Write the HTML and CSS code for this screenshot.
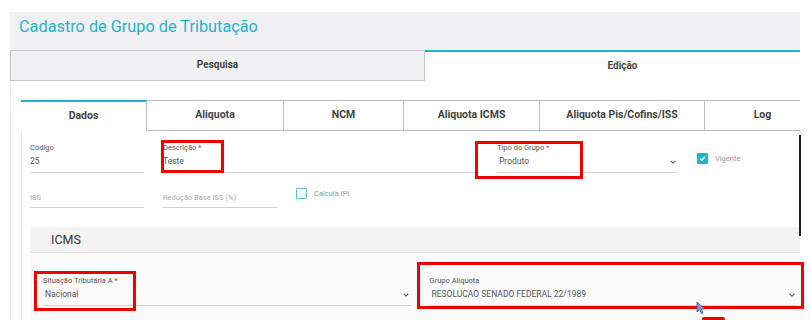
FILE: index.html
```html
<!DOCTYPE html>
<html lang="pt-BR">
<head>
    <meta charset="UTF-8">
    <meta name="viewport" content="width=device-width, initial-scale=1.0">
    <title>Cadastro de Grupo de Tributação</title>
    <link rel="stylesheet" href="styles.css">
</head>
<body>
    <div class="page">
        <header class="title-bar">
            <h1>Cadastro de Grupo de Tributação</h1>
        </header>

        <nav class="main-tabs">
            <div class="main-tab">Pesquisa</div>
            <div class="main-tab active">Edição</div>
        </nav>

        <div class="outer">
            <nav class="sub-tabs">
                <div class="sub-tab active">Dados</div>
                <div class="sub-tab">Aliquota</div>
                <div class="sub-tab">NCM</div>
                <div class="sub-tab">Aliquota ICMS</div>
                <div class="sub-tab">Aliquota Pis/Cofins/ISS</div>
                <div class="sub-tab last">Log</div>
            </nav>

            <div class="inner">
                <div class="row row-main">
                    <div class="field">
                        <label>Código</label>
                        <div class="value">25</div>
                    </div>
                    <div class="field">
                        <label>Descrição <span class="req">*</span></label>
                        <div class="value">Teste</div>
                    </div>
                    <div class="field select">
                        <label>Tipo do Grupo <span class="req">*</span></label>
                        <div class="value">Produto
                            <svg class="chevron" viewBox="0 0 8 5"><polyline points="1,1 4,4 7,1"/></svg>
                        </div>
                    </div>
                    <div class="check check-top">
                        <span class="box checked">
                            <svg viewBox="0 0 10 10"><polyline points="2.2,5.2 4.2,7 7.8,3"/></svg>
                        </span>
                        <span>Vigente</span>
                    </div>
                </div>

                <div class="row row-second">
                    <div class="field empty">
                        <label>ISS</label>
                    </div>
                    <div class="field empty">
                        <label>Redução Base ISS (%)</label>
                    </div>
                    <div class="check">
                        <span class="box"></span>
                        <span>Calcula IPI</span>
                    </div>
                </div>

                <section class="icms">
                    <div class="icms-head">ICMS</div>
                    <div class="icms-body">
                        <div class="field select">
                            <label>Situação Tributária A <span class="req">*</span></label>
                            <div class="value">Nacional
                                <svg class="chevron" viewBox="0 0 8 5"><polyline points="1,1 4,4 7,1"/></svg>
                            </div>
                        </div>
                        <div class="field select">
                            <label>Grupo Aliquota</label>
                            <div class="value">RESOLUCAO SENADO FEDERAL 22/1989
                                <svg class="chevron" viewBox="0 0 8 5"><polyline points="1,1 4,4 7,1"/></svg>
                            </div>
                        </div>
                    </div>
                </section>
            </div>
        </div>
    </div>

    <!-- anotações do print -->
    <div class="mark" style="left: 161px; top: 140px; width: 63px; height: 33px;"></div>
    <div class="mark" style="left: 475px; top: 141px; width: 108px; height: 38px;"></div>
    <div class="mark" style="left: 34px; top: 271px; width: 102px; height: 40px;"></div>
    <div class="mark" style="left: 417px; top: 262px; width: 387px; height: 47px;"></div>
    <div class="mark-stroke"></div>
    <div class="edge-line"></div>
    <svg class="cursor" viewBox="0 0 10 14">
        <path d="M1 1 L1 11 L3.6 8.6 L5.4 12.6 L7 11.9 L5.3 8 L8.8 8 Z"/>
    </svg>
</body>
</html>
```

FILE: styles.css
```css
body { margin: 0; background: #fff; font-family: Roboto, "Liberation Sans", sans-serif; color: #444; position: relative; }
.page { padding: 12px 10px 0 10px; }

.title-bar { height: 38px; background: #f1f1f3; padding: 3px 0 0 9px; box-sizing: border-box; }
.title-bar h1 { margin: 0; font-size: 16.3px; line-height: 24px; font-weight: 400; color: #25b2cb; }

.main-tabs { display: flex; height: 31px; }
.main-tab { box-sizing: border-box; text-align: center; font-size: 10px; font-weight: 700; color: #444; line-height: 27px; }
.main-tab:first-child { flex: 0 0 415px; background: #f1f1f3; border: 1px solid #c6c9d0; }
.main-tab.active { flex: 1; border-top: 2px solid #1fb3cc; background: #fff; padding-left: 20px; }

.outer { border-left: 1px solid #ececec; padding: 19px 0 0 10px; }

.sub-tabs { display: grid; grid-template-columns: 125px 137px 120px 136px 165px 1fr; height: 31px; }
.sub-tab {
    box-sizing: border-box;
    text-align: center;
    font-size: 10.5px;
    font-weight: 700;
    color: #444;
    line-height: 28px;
    border-top: 1px solid #b9bfc8;
    border-left: 1px solid #b9bfc8;
    border-bottom: 1px solid #b9bfc8;
}
.sub-tab.active { border: none; border-top: 2px solid #1fb3cc; }
.sub-tab.last { padding-left: 20px; }

.inner { border-left: 1px solid #ececec; padding: 0 0 30px 8px; }

.row { display: grid; column-gap: 19px; align-items: start; }
.row-main { grid-template-columns: 114px 315px 181px auto; padding-top: 12px; }
.row-second { grid-template-columns: 114px 114px auto; margin-top: 15px; }

.field { border-bottom: 1px solid #d2d2d2; padding-bottom: 4px; }
.field label { display: block; font-size: 7.5px; line-height: 10px; color: #555; margin-bottom: 2px; }
.field .value { font-size: 8.5px; line-height: 13px; color: #555; position: relative; }
.field.select .value { padding-left: 2px; }
.field.empty { padding-top: 5px; }
.field.empty label { color: #aaa; margin-bottom: 0; }
.req { color: #e53935; }

.chevron { position: absolute; right: 2px; top: 5px; width: 6px; height: 4px; fill: none; stroke: #555; stroke-width: 1.4; }

.check { display: flex; align-items: center; gap: 7px; font-size: 7.5px; color: #999; }
.check-top { margin-top: 10px; }
.box { width: 11px; height: 11px; box-sizing: border-box; border: 1px solid #5bc4d7; border-radius: 1px; background: #fff; display: flex; }
.box.checked { background: #23b4cd; border-color: #23b4cd; }
.box svg { width: 100%; height: 100%; fill: none; stroke: #fff; stroke-width: 1.6; }

.icms { margin-top: 19px; }
.icms-head { height: 25px; background: #f3f3f3; border-bottom: 1px solid #e2e2e2; padding-left: 21px; font-size: 12.5px; line-height: 25px; color: #333; }
.icms-body { background: #fafafa; display: grid; grid-template-columns: 1fr 1fr; column-gap: 19px; padding: 23px 3px 20px 13px; }

.mark { position: absolute; box-sizing: border-box; border: 3px solid #ee0000; }
.mark-stroke { position: absolute; left: 702px; top: 317px; width: 23px; height: 4px; background: #ee0000; border-radius: 2px; }
.edge-line { position: absolute; left: 799px; top: 135px; width: 2px; height: 101px; background: #222; }
.cursor { position: absolute; left: 696px; top: 301px; width: 10px; height: 14px; fill: #8f93c8; stroke: #4c5190; stroke-width: 0.8; }
```
